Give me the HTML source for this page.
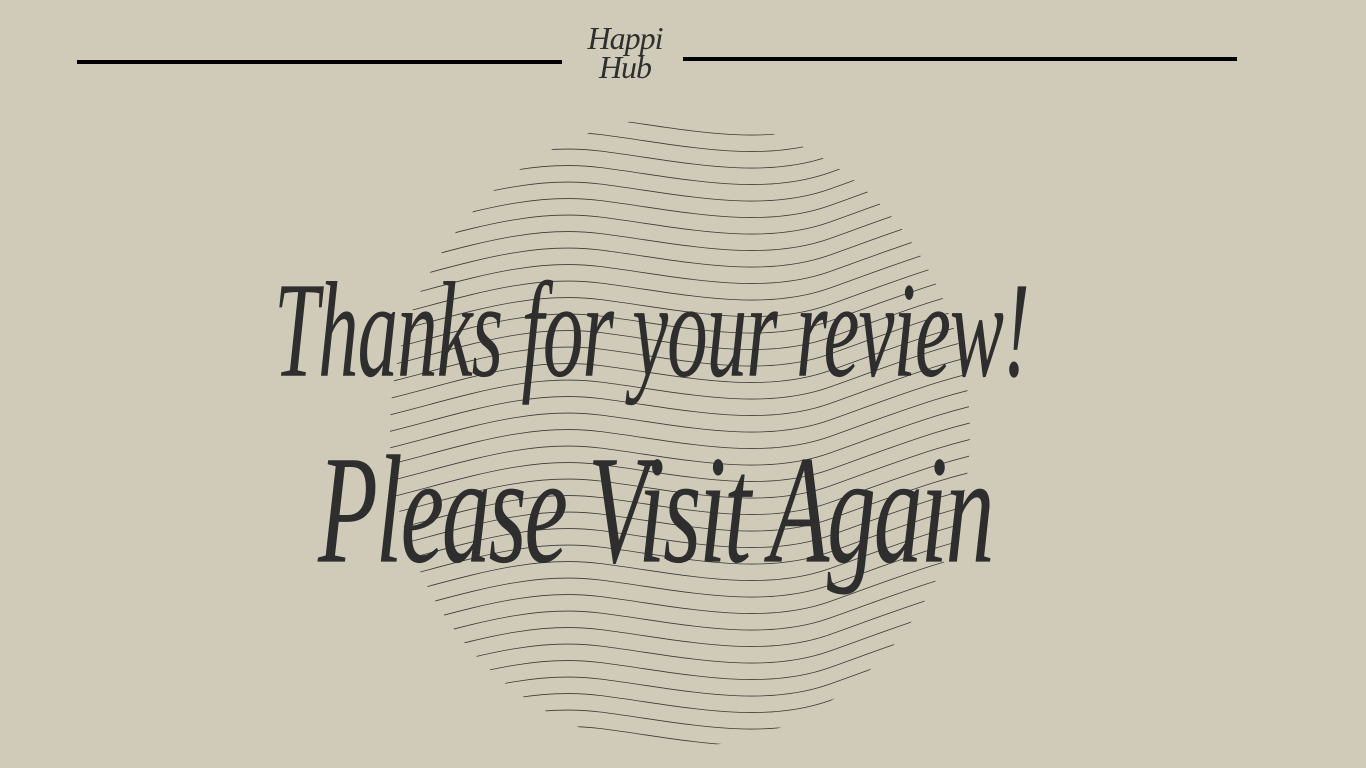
<!DOCTYPE html>
<html><head><meta charset="utf-8"><style>
html,body{margin:0;padding:0;width:1366px;height:768px;overflow:hidden;background:#d0cbb9;}
.l{position:absolute;height:4px;background:#000;}
.logo{position:absolute;left:560px;top:24px;width:130px;text-align:center;font:italic 32px/29px "Liberation Serif",serif;color:#2f2f2f;letter-spacing:-1px;}
svg{position:absolute;left:0;top:0;}
.t{position:absolute;font-family:"Liberation Serif",serif;font-style:italic;color:#2e2e2e;white-space:nowrap;line-height:1;}
</style></head><body>
<div class="l" style="left:77px;top:60px;width:485px;height:4px"></div>
<div class="l" style="left:683px;top:57px;width:554px;height:4px"></div>
<div class="logo">Happi<br>Hub</div>
<svg width="1366" height="768" id="s"><defs><clipPath id="c"><ellipse cx="680" cy="432" rx="290" ry="315"/></clipPath></defs><g id="g" clip-path="url(#c)" fill="none" stroke="#3a3a3a" stroke-width="0.8"></g></svg>
<div class="t" style="left:274px;top:262px;font-size:78px;letter-spacing:-1px;transform:scale(1.04,1.75);transform-origin:left top;">Thanks for your review!</div>
<div class="t" style="left:318px;top:432px;font-size:86px;letter-spacing:-2px;transform:scale(1.14,1.8);transform-origin:left top;">Please Visit Again</div>
<script>
var g=document.getElementById('g'),h='';
for(var y=118;y<760;y+=16.5){
 var d='M360,'+(y+40)+' ';
 d+='C450,'+(y+20)+' 520,'+(y-10)+' 600,'+(y)+' S760,'+(y+30)+' 830,'+(y+5)+' S950,'+(y-40)+' 1010,'+(y-50);
 h+='<path d="'+d+'"/>';
}
g.innerHTML=h;
</script>
</body></html>
